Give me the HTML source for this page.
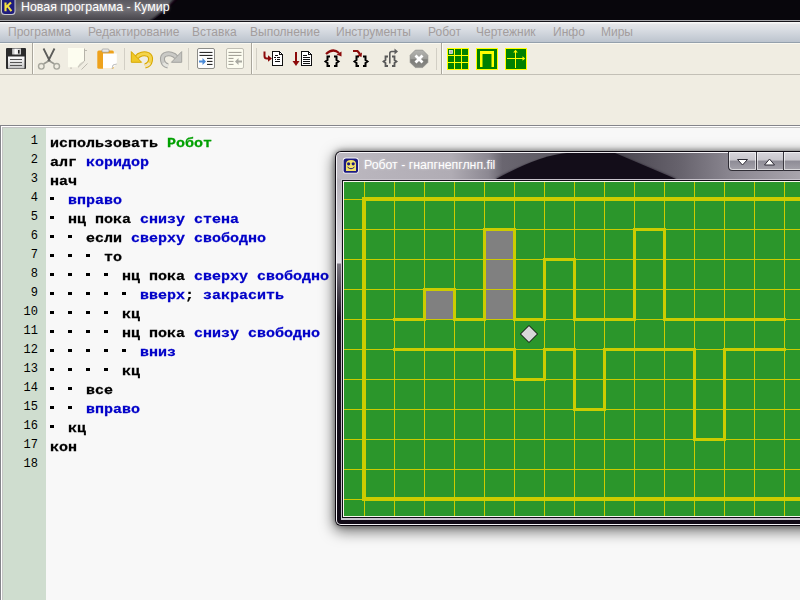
<!DOCTYPE html>
<html><head><meta charset="utf-8">
<style>
*{margin:0;padding:0;box-sizing:border-box}
html,body{width:800px;height:600px;overflow:hidden;background:#f0ede2;font-family:"Liberation Sans",sans-serif;position:relative}
.abs{position:absolute}
#title{left:0;top:0;width:800px;height:20px;overflow:hidden}
#title .t{left:21px;top:2px;color:#fff;font-size:12px;white-space:nowrap;text-shadow:0 0 3px rgba(255,255,255,.35)}
#menu{left:0;top:22px;width:800px;height:20px;background:linear-gradient(#f8f8f8 0,#f8f8f8 1px,#e5e6e9 2px,#d8dce2 40%,#bcc4ce 100%)}
#menu span{position:absolute;top:3px;font-size:12px;color:#a39d9d;white-space:nowrap}
.sep{position:absolute;top:48px;width:1px;height:22px;background:#cfccc2}
.vb{position:absolute;top:43px;width:1px;height:31px;background:#a9a69c}
#ed{left:0;top:125px;width:800px;height:475px;background:#f8f8f8}
#gut{left:3px;top:128px;width:43px;height:472px;background:#cfddcf}
.ln{position:absolute;left:3px;width:35px;text-align:right;font-family:"Liberation Mono",monospace;font-size:12px;line-height:13px;color:#000}
.cl{position:absolute;left:50px;font-family:"Liberation Mono",monospace;font-size:15px;font-weight:bold;color:#000;white-space:pre;line-height:19px;transform:scaleY(0.88);transform-origin:0 14px;-webkit-text-stroke:0.3px currentColor}
.b{color:#0000c8}
.g{color:#00a000}
.d{position:absolute;width:4px;height:3px;background:#000}
#field{left:344px;top:182px;width:456px;height:334px;background:#2b962b;overflow:hidden}
.gv{position:absolute;top:0;width:1px;height:334px;background:#cccc00}
.gh{position:absolute;left:0;height:1px;width:456px;background:#cccc00}
.wl{position:absolute;background:#cccc00}
.pc{position:absolute;width:30px;height:30px;background:#808080}
#rtitle{left:364px;top:158px;color:#fff;font-size:12.3px;white-space:nowrap;text-shadow:0 0 3px rgba(255,255,255,.5)}
</style></head><body>
<!-- main title -->
<svg class="abs" style="left:0;top:0" width="800" height="22">
<defs>
<linearGradient id="tg" x1="0" y1="0" x2="0" y2="1"><stop offset="0" stop-color="#5a5860"/><stop offset=".5" stop-color="#6e6c72"/><stop offset="1" stop-color="#48464c"/></linearGradient>
<linearGradient id="tg2" x1="0" y1="0" x2="1" y2="0"><stop offset="0" stop-color="#0c0812" stop-opacity="0"/><stop offset="1" stop-color="#0c0812"/></linearGradient>
</defs>
<rect x="0" y="0" width="800" height="20" fill="url(#tg)"/>
<path d="M175 -2 C166 8 158 16 148 22 L800 22 L800 -2 Z" fill="#08060c" filter="url(#tb1)"/><path d="M178 0 C169 8 161 15 153 20 L800 20 L800 0 Z" fill="#08060c"/>
<rect x="0" y="20" width="800" height="1" fill="#a6a6aa"/>
<rect x="0" y="21" width="800" height="1" fill="#141218"/>
<filter id="tb1"><feGaussianBlur stdDeviation="1"/></filter>
<path d="M1 -3 L15.5 -3 L15.5 11.5 Q15.5 15 12 15 L4.5 15 Q1 15 1 11.5 Z" fill="#c8c8cc"/>
<path d="M2 -3 L14.5 -3 L14.5 11 Q14.5 14 11.5 14 L5 14 Q2 14 2 11 Z" fill="#1e1c7c"/>
<path d="M5.5 2.4 L5.5 11.2 M5.8 7.6 L11 2.4 M7.6 6 L11.4 11.2" stroke="#f4e040" stroke-width="2.1" fill="none"/>
</svg>
<div class="abs" style="left:21px;top:0px;color:#fff;font-size:12.4px;white-space:nowrap;text-shadow:0 0 3px rgba(255,255,255,.4)">Новая программа - Кумир</div>
<div id="menu" class="abs">
<span style="left:8px">Программа</span>
<span style="left:88px">Редактирование</span>
<span style="left:192px">Вставка</span>
<span style="left:250px">Выполнение</span>
<span style="left:336px">Инструменты</span>
<span style="left:428px">Робот</span>
<span style="left:476px">Чертежник</span>
<span style="left:553px">Инфо</span>
<span style="left:601px">Миры</span>
</div>
<div class="abs" style="left:0;top:42px;width:800px;height:1px;background:#94a0ac"></div><div class="abs" style="left:0;top:43px;width:800px;height:1px;background:#fbf9f0"></div>
<div class="abs" style="left:0;top:74px;width:800px;height:1px;background:#c3c0b6"></div>

<svg class="abs" style="left:0;top:43px" width="800" height="31" viewBox="0 43 800 31">
<defs>
<linearGradient id="shut" x1="0" y1="0" x2="1" y2="0"><stop offset="0" stop-color="#a8a8a8"/><stop offset=".4" stop-color="#ffffff"/><stop offset="1" stop-color="#c8c8c8"/></linearGradient>
<linearGradient id="lab" x1="0" y1="0" x2="0" y2="1"><stop offset="0" stop-color="#ffffff"/><stop offset="1" stop-color="#c4c4c4"/></linearGradient>
<linearGradient id="und" x1="0" y1="0" x2="1" y2="1"><stop offset="0" stop-color="#f8e060"/><stop offset=".6" stop-color="#f0c020"/><stop offset="1" stop-color="#f4d8a0"/></linearGradient>
<linearGradient id="red" x1="0" y1="0" x2="1" y2="1"><stop offset="0" stop-color="#b8b8b4"/><stop offset="1" stop-color="#d8d8d4"/></linearGradient>
<linearGradient id="oct" x1="0" y1="0" x2="0" y2="1"><stop offset="0" stop-color="#b4b4b0"/><stop offset=".5" stop-color="#9c9c98"/><stop offset=".55" stop-color="#7c7c78"/><stop offset="1" stop-color="#8c8c88"/></linearGradient>
</defs>
<!-- separators / boundaries -->
<rect x="32" y="43" width="1" height="31" fill="#a9a69c"/><rect x="33" y="43" width="1" height="31" fill="#fdfcf6"/>
<rect x="124" y="48" width="1" height="22" fill="#d2cfc5"/>
<rect x="188" y="48" width="1" height="22" fill="#d2cfc5"/>
<rect x="251" y="43" width="1" height="31" fill="#a9a69c"/><rect x="252" y="43" width="1" height="31" fill="#fdfcf6"/>
<rect x="256" y="48" width="1" height="22" fill="#d2cfc5"/>
<rect x="436" y="48" width="1" height="22" fill="#d2cfc5"/>
<rect x="441" y="43" width="1" height="31" fill="#a9a69c"/><rect x="442" y="43" width="1" height="31" fill="#fdfcf6"/>
<!-- save -->
<rect x="6" y="48" width="20" height="21" rx="1" fill="#2c2c2c"/>
<rect x="12" y="48.5" width="9" height="6" fill="url(#shut)"/>
<rect x="18" y="50" width="1.6" height="3.6" fill="#222"/>
<rect x="8" y="56.5" width="16.5" height="12" fill="url(#lab)"/>
<rect x="10" y="59" width="12" height="1" fill="#555"/>
<rect x="10" y="62" width="12" height="1" fill="#555"/>
<rect x="10" y="65" width="12" height="1" fill="#555"/>
<!-- scissors -->
<path d="M43.5 48.5 L50 61.5 M54.5 48.5 L48 61.5" stroke="#5c5c5a" stroke-width="1.8" fill="none"/>
<path d="M48.5 61 L43.5 64 M49.5 61 L54.5 64" stroke="#9a9a92" stroke-width="1.6" fill="none"/>
<circle cx="41.3" cy="66.3" r="2.8" stroke="#a8a89e" stroke-width="1.4" fill="none"/>
<circle cx="56.7" cy="66.3" r="2.8" stroke="#a8a89e" stroke-width="1.4" fill="none"/>
<!-- copy -->
<path d="M68 48 L84.5 48 L84.5 61 L77.5 67.3 L68 67.3 Z" fill="#fdfdf0"/>
<path d="M84.5 48.5 L84.5 61 L78 67.3" stroke="#aeaca2" stroke-width=".9" fill="none"/>
<path d="M84.5 50.5 L87 50.5 M71 67.3 L71 69 M81.5 69.5 L87.5 63.5" stroke="#b8b6ac" stroke-width=".9" fill="none"/>
<path d="M78 67 Q79 63 84 61.5" stroke="#d0cec4" stroke-width=".8" fill="none"/>
<!-- paste -->
<rect x="97.3" y="50.4" width="16.5" height="18.3" rx="1.5" fill="#eea21c"/>
<rect x="102" y="49" width="7" height="3.2" rx="1" fill="#e8e8e8" stroke="#909090" stroke-width=".6"/>
<path d="M103 53.4 L116.8 53.4 L116.8 64 L112 68.8 L103 68.8 Z" fill="#ffffff"/>
<path d="M112 68.8 L113 65 L116.8 64" stroke="#a0a0a0" stroke-width=".7" fill="none"/>
<!-- undo -->
<g id="undoG">
<path d="M136.5 57.5 C139 54 144 53 148 54.5 C152 56.5 151.5 64.5 145 66" stroke="#d8a800" stroke-width="5" fill="none"/>
<path d="M136.5 57.5 C139 54 144 53 148 54.5 C152 56.5 151.5 64.5 145 66" stroke="#f4d44c" stroke-width="3" fill="none"/>
<path d="M131.3 51.6 L141.6 62.3 L131.3 62.3 Z" fill="#f0c828" stroke="#d8a800" stroke-width="1" stroke-linejoin="round"/>
<path d="M149.5 63 C148.5 65 147 65.6 145 66" stroke="#f2e2b8" stroke-width="3" fill="none"/>
</g>
<!-- redo -->
<g transform="translate(313,0) scale(-1,1)">
<path d="M136.5 57.5 C139 54 144 53 148 54.5 C152 56.5 151.5 64.5 145 66" stroke="#a4a4a0" stroke-width="5" fill="none"/>
<path d="M136.5 57.5 C139 54 144 53 148 54.5 C152 56.5 151.5 64.5 145 66" stroke="#cacac6" stroke-width="3" fill="none"/>
<path d="M131.3 51.6 L141.6 62.3 L131.3 62.3 Z" fill="#c4c4c0" stroke="#a4a4a0" stroke-width="1" stroke-linejoin="round"/>
<path d="M149.5 63 C148.5 65 147 65.6 145 66" stroke="#e4e4de" stroke-width="3" fill="none"/>
</g>
<!-- indent -->
<rect x="197.5" y="48.5" width="17" height="20" rx="1.5" fill="#fdfdfd" stroke="#8c8c88" stroke-width="1"/>
<rect x="199.5" y="51.9" width="13" height="1.1" fill="#2c2c2c"/>
<rect x="199.5" y="54.9" width="13" height="1.1" fill="#2c2c2c"/>
<rect x="207" y="57.9" width="5.5" height="1.1" fill="#2c2c2c"/>
<rect x="207" y="60.9" width="5.5" height="1.1" fill="#2c2c2c"/>
<rect x="207" y="63.9" width="5.5" height="1.1" fill="#2c2c2c"/>
<path d="M199 60.6 L202.5 60.6 L202.5 58 L206 61.5 L202.5 65 L202.5 62.4 L199 62.4 Z" fill="#4a8ad8"/>
<!-- unindent -->
<rect x="226.5" y="48.5" width="17" height="20" rx="1.5" fill="#fcfcf0" stroke="#c0beb4" stroke-width="1"/>
<rect x="228.5" y="51.9" width="13" height="1" fill="#9c9a90"/>
<rect x="228.5" y="54.9" width="13" height="1" fill="#9c9a90"/>
<rect x="228.5" y="57.9" width="5" height="1" fill="#9c9a90"/>
<rect x="228.5" y="60.9" width="5" height="1" fill="#9c9a90"/>
<rect x="228.5" y="63.9" width="5" height="1" fill="#9c9a90"/>
<path d="M242 60.6 L238.5 60.6 L238.5 58 L235 61.5 L238.5 65 L238.5 62.4 L242 62.4 Z" fill="#a8a8a0"/>
<!-- step icons -->
<g shape-rendering="crispEdges">
<path d="M272 51 L280 51 L283 54 L283 66 L272 66 Z" fill="#fff"/>
<rect x="272" y="51" width="1" height="15" fill="#111"/><rect x="272" y="65" width="11" height="1" fill="#111"/>
<rect x="272" y="51" width="8" height="1" fill="#111"/><rect x="282" y="54" width="1" height="12" fill="#111"/>
<rect x="279" y="52" width="1" height="3" fill="#111"/><rect x="280" y="54" width="2" height="1" fill="#111"/>
<rect x="280" y="52" width="1" height="1" fill="#111"/><rect x="281" y="53" width="1" height="1" fill="#111"/>
<rect x="275" y="55" width="3" height="1" fill="#111"/>
<rect x="274" y="57" width="2" height="1" fill="#111"/><rect x="277" y="57" width="3" height="1" fill="#111"/>
<rect x="275" y="59" width="1" height="1" fill="#111"/><rect x="277" y="59" width="3" height="1" fill="#111"/>
<rect x="275" y="61" width="5" height="1" fill="#111"/>
<path d="M301 51 L309 51 L312 54 L312 66 L301 66 Z" fill="#fff"/>
<rect x="301" y="51" width="1" height="15" fill="#111"/><rect x="301" y="65" width="11" height="1" fill="#111"/>
<rect x="301" y="51" width="8" height="1" fill="#111"/><rect x="311" y="54" width="1" height="12" fill="#111"/>
<rect x="308" y="52" width="1" height="3" fill="#111"/><rect x="309" y="54" width="2" height="1" fill="#111"/>
<rect x="309" y="52" width="1" height="1" fill="#111"/><rect x="310" y="53" width="1" height="1" fill="#111"/>
<rect x="303" y="55" width="4" height="1" fill="#111"/>
<rect x="303" y="57" width="7" height="1" fill="#111"/>
<rect x="303" y="59" width="7" height="1" fill="#111"/>
<rect x="303" y="61" width="7" height="1" fill="#111"/>
<rect x="303" y="63" width="7" height="1" fill="#111"/>
</g>
<path d="M264.5 51.5 L264.5 56 Q264.5 58.5 267 58.5 L269 58.5" stroke="#8c0a0a" stroke-width="2" fill="none"/>
<path d="M268 55.3 L272 58.5 L268 61.7 Z" fill="#8c0a0a"/>
<rect x="295" y="52" width="2" height="10" fill="#8c0a0a"/>
<path d="M292.5 61 L299.5 61 L296 66 Z" fill="#8c0a0a"/>
<!-- braces -->
<path d="M330 56.5 L327.5 56.5 L327.5 60 L325.5 61.5 L327.5 63 L327.5 66 L330 66" stroke="#000" stroke-width="2" fill="none" stroke-linejoin="miter"/><path d="M334 56.5 L336.5 56.5 L336.5 60 L338.5 61.5 L336.5 63 L336.5 66 L334 66" stroke="#000" stroke-width="2" fill="none" stroke-linejoin="miter"/>
<path d="M359 56.5 L356.5 56.5 L356.5 60 L354.5 61.5 L356.5 63 L356.5 66 L359 66" stroke="#000" stroke-width="2" fill="none" stroke-linejoin="miter"/><path d="M363 56.5 L365.5 56.5 L365.5 60 L367.5 61.5 L365.5 63 L365.5 66 L363 66" stroke="#000" stroke-width="2" fill="none" stroke-linejoin="miter"/>
<path d="M326 54 Q333 47.5 339 53" stroke="#8c0a0a" stroke-width="2.2" fill="none"/>
<path d="M336.5 54.5 L341.5 51.5 L341.5 56.5 Z" fill="#8c0a0a"/>
<path d="M353 51 L357.5 51 L360 54" stroke="#8c0a0a" stroke-width="2.2" fill="none"/>
<path d="M357 55.5 L362 52.5 L361.5 57 Z" fill="#8c0a0a"/>
<path d="M388 56.5 L385.5 56.5 L385.5 60 L383.5 61.5 L385.5 63 L385.5 66 L388 66" stroke="#5a5a5a" stroke-width="1.8" fill="none" stroke-linejoin="miter"/><path d="M392 56.5 L394.5 56.5 L394.5 60 L396.5 61.5 L394.5 63 L394.5 66 L392 66" stroke="#5a5a5a" stroke-width="1.8" fill="none" stroke-linejoin="miter"/>
<path d="M389.8 63.5 L389.8 53.5 Q389.8 51.5 391.8 51.5 L395 51.5" stroke="#5c5c5c" stroke-width="1.6" fill="none"/>
<path d="M394.5 48.5 L398 51.5 L394.5 54.5 Z" fill="#5c5c5c"/>
<!-- stop -->
<path d="M415.3 50.1 L422.7 50.1 L427.9 55.3 L427.9 62.4 L422.7 67.6 L415.3 67.6 L410.1 62.4 L410.1 55.3 Z" fill="url(#oct)" stroke="#8a8a86" stroke-width=".6"/>
<path d="M415.5 55.5 L422.5 62.5 M422.5 55.5 L415.5 62.5" stroke="#fff" stroke-width="2.8"/>
<!-- robot icons -->
<rect x="447" y="48" width="22" height="22" fill="#ffff00"/>
<g fill="#008000">
<rect x="448" y="49" width="6" height="6"/><rect x="455" y="49" width="6" height="6"/><rect x="462" y="49" width="6" height="6"/>
<rect x="448" y="56" width="6" height="6"/><rect x="455" y="56" width="6" height="6"/><rect x="462" y="56" width="6" height="6"/>
<rect x="448" y="63" width="6" height="6"/><rect x="455" y="63" width="6" height="6"/><rect x="462" y="63" width="6" height="6"/>
</g>
<rect x="449.5" y="50.5" width="3" height="3" fill="#b8b8b8" stroke="#e0e0e0" stroke-width=".8"/>
<rect x="476" y="48" width="22" height="22" fill="#ffff00"/>
<rect x="477" y="49" width="20" height="20" fill="#008000"/>
<path d="M480 67 L480 51 L494 51 L494 67 L491.5 67 L491.5 54 L482.5 54 L482.5 67 Z" fill="#ffff00"/>
<rect x="505" y="48" width="22" height="22" fill="#ffff00"/>
<rect x="506" y="49" width="20" height="20" fill="#008000"/>
<rect x="515" y="51" width="1" height="17" fill="#ffff00"/>
<rect x="507" y="58" width="17" height="1" fill="#ffff00"/>
<path d="M513.2 52.5 L515.5 49.8 L517.8 52.5 Z" fill="#ffff00"/>
<path d="M522.5 56.2 L525.2 58.5 L522.5 60.8 Z" fill="#ffff00"/>
</svg>

<div id="ed" class="abs"></div>
<div class="abs" style="left:0;top:125px;width:800px;height:1px;background:#84848a"></div>
<div class="abs" style="left:0;top:125px;width:1px;height:475px;background:#84848a"></div>
<div class="abs" style="left:1px;top:126px;width:799px;height:1px;background:#fff"></div>
<div class="abs" style="left:1px;top:126px;width:1px;height:474px;background:#fff"></div>
<div class="abs" style="left:2px;top:127px;width:798px;height:1px;background:#c4c4c4"></div>
<div class="abs" style="left:2px;top:127px;width:1px;height:473px;background:#c4c4c4"></div>
<div id="gut" class="abs"></div>
<div class="ln" style="top:135px">1</div>
<div class="cl " style="left:50px;top:134px">использовать </div>
<div class="cl g" style="left:167px;top:134px">Робот</div>
<div class="ln" style="top:154px">2</div>
<div class="cl " style="left:50px;top:153px">алг </div>
<div class="cl b" style="left:86px;top:153px">коридор</div>
<div class="ln" style="top:173px">3</div>
<div class="cl " style="left:50px;top:172px">нач</div>
<div class="ln" style="top:192px">4</div>
<div class="d" style="left:50px;top:197px"></div>
<div class="cl b" style="left:68px;top:191px">вправо</div>
<div class="ln" style="top:211px">5</div>
<div class="d" style="left:50px;top:216px"></div>
<div class="cl " style="left:68px;top:210px">нц пока </div>
<div class="cl b" style="left:140px;top:210px">снизу стена</div>
<div class="ln" style="top:230px">6</div>
<div class="d" style="left:50px;top:235px"></div>
<div class="d" style="left:68px;top:235px"></div>
<div class="cl " style="left:86px;top:229px">если </div>
<div class="cl b" style="left:131px;top:229px">сверху свободно</div>
<div class="ln" style="top:249px">7</div>
<div class="d" style="left:50px;top:254px"></div>
<div class="d" style="left:68px;top:254px"></div>
<div class="d" style="left:86px;top:254px"></div>
<div class="cl " style="left:104px;top:248px">то</div>
<div class="ln" style="top:268px">8</div>
<div class="d" style="left:50px;top:273px"></div>
<div class="d" style="left:68px;top:273px"></div>
<div class="d" style="left:86px;top:273px"></div>
<div class="d" style="left:104px;top:273px"></div>
<div class="cl " style="left:122px;top:267px">нц пока </div>
<div class="cl b" style="left:194px;top:267px">сверху свободно</div>
<div class="ln" style="top:287px">9</div>
<div class="d" style="left:50px;top:292px"></div>
<div class="d" style="left:68px;top:292px"></div>
<div class="d" style="left:86px;top:292px"></div>
<div class="d" style="left:104px;top:292px"></div>
<div class="d" style="left:122px;top:292px"></div>
<div class="cl b" style="left:140px;top:286px">вверх</div>
<div class="cl " style="left:185px;top:286px">;</div>
<div class="cl b" style="left:203px;top:286px">закрасить</div>
<div class="ln" style="top:306px">10</div>
<div class="d" style="left:50px;top:311px"></div>
<div class="d" style="left:68px;top:311px"></div>
<div class="d" style="left:86px;top:311px"></div>
<div class="d" style="left:104px;top:311px"></div>
<div class="cl " style="left:122px;top:305px">кц</div>
<div class="ln" style="top:325px">11</div>
<div class="d" style="left:50px;top:330px"></div>
<div class="d" style="left:68px;top:330px"></div>
<div class="d" style="left:86px;top:330px"></div>
<div class="d" style="left:104px;top:330px"></div>
<div class="cl " style="left:122px;top:324px">нц пока </div>
<div class="cl b" style="left:194px;top:324px">снизу свободно</div>
<div class="ln" style="top:344px">12</div>
<div class="d" style="left:50px;top:349px"></div>
<div class="d" style="left:68px;top:349px"></div>
<div class="d" style="left:86px;top:349px"></div>
<div class="d" style="left:104px;top:349px"></div>
<div class="d" style="left:122px;top:349px"></div>
<div class="cl b" style="left:140px;top:343px">вниз</div>
<div class="ln" style="top:363px">13</div>
<div class="d" style="left:50px;top:368px"></div>
<div class="d" style="left:68px;top:368px"></div>
<div class="d" style="left:86px;top:368px"></div>
<div class="d" style="left:104px;top:368px"></div>
<div class="cl " style="left:122px;top:362px">кц</div>
<div class="ln" style="top:382px">14</div>
<div class="d" style="left:50px;top:387px"></div>
<div class="d" style="left:68px;top:387px"></div>
<div class="cl " style="left:86px;top:381px">все</div>
<div class="ln" style="top:401px">15</div>
<div class="d" style="left:50px;top:406px"></div>
<div class="d" style="left:68px;top:406px"></div>
<div class="cl b" style="left:86px;top:400px">вправо</div>
<div class="ln" style="top:420px">16</div>
<div class="d" style="left:50px;top:425px"></div>
<div class="cl " style="left:68px;top:419px">кц</div>
<div class="ln" style="top:439px">17</div>
<div class="cl " style="left:50px;top:438px">кон</div>
<div class="ln" style="top:458px">18</div>
<div class="abs" style="left:335px;top:151px;width:520px;height:375px;border-radius:7px;box-shadow:0 4px 14px 2px rgba(0,0,0,.5), 0 0 5px 1px rgba(0,0,0,.35)"></div>
<svg class="abs" style="left:335px;top:151px" width="465" height="375">
<defs>
<linearGradient id="wb" x1="0" y1="0" x2="0" y2="375" gradientUnits="userSpaceOnUse">
<stop offset="0" stop-color="#c4c0c8"/><stop offset="0.08" stop-color="#b4b0b8"/><stop offset="0.2987" stop-color="#e0dee4"/><stop offset="0.3013" stop-color="#7c7882"/><stop offset="0.445" stop-color="#1a1420"/><stop offset="1" stop-color="#120c18"/></linearGradient>
<linearGradient id="tt" x1="0" y1="0" x2="465" y2="0" gradientUnits="userSpaceOnUse">
<stop offset="0" stop-color="#bcb8c0"/><stop offset="0.25" stop-color="#b0acb4"/><stop offset="0.33" stop-color="#8c8892"/><stop offset="0.36" stop-color="#6a6670"/><stop offset="0.62" stop-color="#4c4852"/><stop offset="0.74" stop-color="#66626c"/><stop offset="0.85" stop-color="#8a8690"/><stop offset="1" stop-color="#a8a4ac"/></linearGradient>
<linearGradient id="bt" x1="0" y1="0" x2="0" y2="1">
<stop offset="0" stop-color="#d8d6dc"/><stop offset="0.45" stop-color="#c8c6cc"/><stop offset="0.5" stop-color="#8e8c96"/><stop offset="1" stop-color="#a4a2aa"/></linearGradient>
<filter id="bl" x="-20%" y="-50%" width="140%" height="200%"><feGaussianBlur stdDeviation="1.2"/></filter>
</defs>
<rect x="0" y="0" width="500" height="375" rx="6" fill="#0c0810"/>
<rect x="1" y="1" width="500" height="373" rx="5" fill="#f4f2f6"/>
<rect x="2" y="2" width="500" height="371" rx="4" fill="url(#wb)"/>
<rect x="2" y="2" width="500" height="26" rx="4" fill="url(#tt)"/>
<path d="M160 28 Q205 5 232 3 L281 3 L342 28 Z" fill="#130d19" filter="url(#bl)" opacity=".6"/>
<path d="M161 28 Q205 4 232 2 L280 2 L341 28 Z" fill="#130d19"/>
<rect x="6" y="28" width="500" height="341" fill="#c8c4cc"/>
<rect x="7" y="29" width="500" height="338" fill="#100c16"/>
<rect x="8" y="30" width="500" height="336" fill="#f8f6ec"/>
<!-- buttons -->
<path d="M393 1 L393 15.5 Q393 20 397.5 20 L466 20 L466 1 Z" fill="#2e2c34"/>
<path d="M394 1 L394 15.5 Q394 19 397.5 19 L466 19 L466 1 Z" fill="url(#bt)"/>
<path d="M394.5 1.5 L394.5 15.5 Q394.5 18.5 397.5 18.5 L420.5 18.5 L420.5 1.5 Z" fill="none" stroke="#ffffff" stroke-opacity=".6"/>
<rect x="421" y="1" width="1" height="19" fill="#3a3840"/>
<rect x="422.5" y="1.5" width="26" height="17" fill="none" stroke="#ffffff" stroke-opacity=".6"/>
<rect x="448" y="1" width="1" height="19" fill="#3a3840"/>
<rect x="449.5" y="1.5" width="26" height="17" fill="none" stroke="#ffffff" stroke-opacity=".6"/>
<path d="M402.5 8.5 L412.5 8.5 L407.5 14 Z" fill="#fff" stroke="#2c2a34" stroke-width="1"/>
<path d="M429.5 14 L439.5 14 L434.5 8 Z" fill="#fff" stroke="#2c2a34" stroke-width="1"/>
<!-- icon -->
<rect x="7.8" y="6.6" width="16" height="16" rx="3.2" fill="#fff" opacity=".85"/>
<rect x="8.6" y="7.4" width="14.4" height="14.4" rx="2.6" fill="#1c1a80"/>
<path d="M11 13 Q11 9 16 9 Q21 9 21 13 L21 20 L11 20 Z" fill="#f4e468"/>
<circle cx="13.6" cy="12.8" r="1.6" fill="#1c1a80"/><circle cx="18.2" cy="12.8" r="1.6" fill="#1c1a80"/>
<path d="M12.5 16 Q16 19.5 19.5 16" stroke="#1c1a78" stroke-width="1" fill="none"/>
</svg>
<div id="rtitle" class="abs">Робот - гнапгнепглнп.fil</div>
<div id="field" class="abs">
<div class="pc" style="left:80px;top:107px"></div>
<div class="pc" style="left:140px;top:47px"></div>
<div class="pc" style="left:140px;top:77px"></div>
<div class="pc" style="left:140px;top:107px"></div>
<div class="gv" style="left:20px"></div>
<div class="gv" style="left:50px"></div>
<div class="gv" style="left:80px"></div>
<div class="gv" style="left:110px"></div>
<div class="gv" style="left:140px"></div>
<div class="gv" style="left:170px"></div>
<div class="gv" style="left:200px"></div>
<div class="gv" style="left:230px"></div>
<div class="gv" style="left:260px"></div>
<div class="gv" style="left:290px"></div>
<div class="gv" style="left:320px"></div>
<div class="gv" style="left:350px"></div>
<div class="gv" style="left:380px"></div>
<div class="gv" style="left:410px"></div>
<div class="gv" style="left:440px"></div>
<div class="gh" style="top:17px"></div>
<div class="gh" style="top:47px"></div>
<div class="gh" style="top:77px"></div>
<div class="gh" style="top:107px"></div>
<div class="gh" style="top:137px"></div>
<div class="gh" style="top:167px"></div>
<div class="gh" style="top:197px"></div>
<div class="gh" style="top:227px"></div>
<div class="gh" style="top:257px"></div>
<div class="gh" style="top:287px"></div>
<div class="gh" style="top:317px"></div>
<div class="wl" style="left:18px;top:15px;width:438px;height:4px"></div>
<div class="wl" style="left:18px;top:315px;width:438px;height:4px"></div>
<div class="wl" style="left:18px;top:15px;width:4px;height:304px"></div>
<div class="wl" style="left:49px;top:136px;width:33px;height:3px"></div>
<div class="wl" style="left:79px;top:106px;width:3px;height:33px"></div>
<div class="wl" style="left:79px;top:106px;width:33px;height:3px"></div>
<div class="wl" style="left:109px;top:106px;width:3px;height:33px"></div>
<div class="wl" style="left:109px;top:136px;width:33px;height:3px"></div>
<div class="wl" style="left:139px;top:46px;width:3px;height:93px"></div>
<div class="wl" style="left:139px;top:46px;width:33px;height:3px"></div>
<div class="wl" style="left:169px;top:46px;width:3px;height:93px"></div>
<div class="wl" style="left:169px;top:136px;width:33px;height:3px"></div>
<div class="wl" style="left:199px;top:76px;width:3px;height:63px"></div>
<div class="wl" style="left:199px;top:76px;width:33px;height:3px"></div>
<div class="wl" style="left:229px;top:76px;width:3px;height:63px"></div>
<div class="wl" style="left:229px;top:136px;width:63px;height:3px"></div>
<div class="wl" style="left:289px;top:46px;width:3px;height:93px"></div>
<div class="wl" style="left:289px;top:46px;width:33px;height:3px"></div>
<div class="wl" style="left:319px;top:46px;width:3px;height:93px"></div>
<div class="wl" style="left:319px;top:136px;width:123px;height:3px"></div>
<div class="wl" style="left:49px;top:166px;width:123px;height:3px"></div>
<div class="wl" style="left:169px;top:166px;width:3px;height:33px"></div>
<div class="wl" style="left:169px;top:196px;width:33px;height:3px"></div>
<div class="wl" style="left:199px;top:166px;width:3px;height:33px"></div>
<div class="wl" style="left:199px;top:166px;width:33px;height:3px"></div>
<div class="wl" style="left:229px;top:166px;width:3px;height:63px"></div>
<div class="wl" style="left:229px;top:226px;width:33px;height:3px"></div>
<div class="wl" style="left:259px;top:166px;width:3px;height:63px"></div>
<div class="wl" style="left:259px;top:166px;width:93px;height:3px"></div>
<div class="wl" style="left:349px;top:166px;width:3px;height:93px"></div>
<div class="wl" style="left:349px;top:256px;width:33px;height:3px"></div>
<div class="wl" style="left:379px;top:166px;width:3px;height:93px"></div>
<div class="wl" style="left:379px;top:166px;width:63px;height:3px"></div>
<svg class="abs" style="left:176px;top:143px" width="18" height="18"><path d="M9 0.5 L17.5 9 L9 17.5 L0.5 9 Z" fill="#d8d8d8" stroke="#000" stroke-width="1"/></svg>
</div>

</body></html>
